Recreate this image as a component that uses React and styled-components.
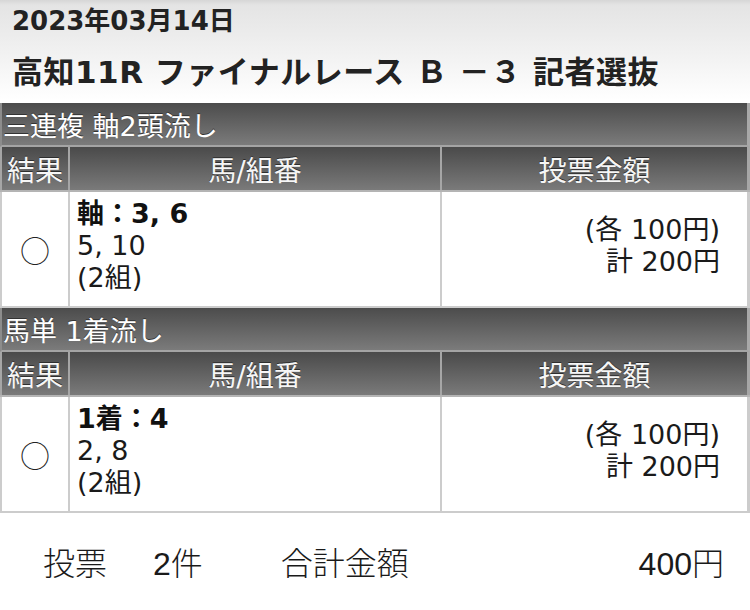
import React from 'react';
import styled, { createGlobalStyle } from 'styled-components';

const GlobalStyle = createGlobalStyle`
  html, body {
    margin: 0;
    padding: 0;
    background: #ffffff;
  }
  body {
    font-family: "DejaVu Sans", "Noto Sans CJK JP", sans-serif;
    color: #1a1a1a;
  }
`;

const bets = [
  {
    id: 1,
    title: '三連複 軸2頭流し',
    main: '軸：3, 6',
    partners: '5, 10',
    combos: '(2組)',
    each: '(各 100円)',
    total: '計 200円',
  },
  {
    id: 2,
    title: '馬単 1着流し',
    main: '1着：4',
    partners: '2, 8',
    combos: '(2組)',
    each: '(各 100円)',
    total: '計 200円',
  },
];

const App = () => {
  return (
    <Page>
      <GlobalStyle />
      <RaceHeader>
        <RaceDate>2023年03月14日</RaceDate>
        <RaceTitle>高知11R ファイナルレース Ｂ －３ 記者選抜</RaceTitle>
      </RaceHeader>

      {bets.map(bet => (
        <Section key={bet.id}>
          <SectionBar>{bet.title}</SectionBar>
          <Row head>
            <HeadCell>結果</HeadCell>
            <HeadCell>馬/組番</HeadCell>
            <HeadCell>投票金額</HeadCell>
          </Row>
          <Row>
            <ResultCell>○</ResultCell>
            <HorseCell>
              <strong>{bet.main}</strong>
              <span>{bet.partners}</span>
              <span>{bet.combos}</span>
            </HorseCell>
            <AmountCell>
              <span>{bet.each}</span>
              <span>{bet.total}</span>
            </AmountCell>
          </Row>
        </Section>
      ))}

      <Summary>
        <span className='label'>投票</span>
        <span className='count'>2件</span>
        <span className='label'>合計金額</span>
        <span className='sum'>400円</span>
      </Summary>
    </Page>
  );
};

export default App;

const Page = styled.div`
  width: 750px;
  height: 610px;
  overflow: hidden;
  background: #ffffff;
`;

const RaceHeader = styled.div`
  height: 103px;
  box-sizing: border-box;
  padding: 6px 12px 0;
  background: linear-gradient(#d6d6d6 0px, #e4e4e4 5px, #f3f3f3 60px, #ffffff 100px);
  color: #222222;
`;

const RaceDate = styled.div`
  font-size: 26px;
  font-weight: bold;
  line-height: 30px;
`;

const RaceTitle = styled.div`
  margin-top: 18px;
  font-size: 31px;
  font-weight: bold;
  line-height: 36px;
  letter-spacing: 0.5px;
  white-space: nowrap;
`;

const Section = styled.div`
  display: flex;
  flex-direction: column;
`;

const SectionBar = styled.div`
  height: 42px;
  padding-left: 1px;
  display: flex;
  align-items: center;
  background: linear-gradient(#4c4c4c, #7b7b7b);
  border-bottom: 2px solid #a4a4a4;
  border-left: 2px solid #8c8c8c;
  border-right: 3px solid #a8a8a8;
  color: #ffffff;
  font-size: 27px;
  text-shadow: 0 -1px 0 #333333;
`;

const Row = styled.div`
  display: grid;
  grid-template-columns: 66px 370px 1fr;
  column-gap: 2px;
  height: ${p => (p.head ? '43px' : '114px')};
  padding-left: 2px;
  padding-right: 3px;
  background: ${p => (p.head ? '#a6a6a6' : '#cccccc')};
  border-bottom: 2px solid ${p => (p.head ? '#b4b4b4' : '#cccccc')};
`;

const HeadCell = styled.div`
  display: flex;
  align-items: center;
  justify-content: center;
  background: linear-gradient(#4a4a4a, #7a7a7a);
  color: #f6f6f6;
  font-size: 28px;
  text-shadow: 0 -1px 0 #2e2e2e;
`;

const ResultCell = styled.div`
  display: flex;
  align-items: center;
  justify-content: center;
  background: #ffffff;
  font-family: "Noto Sans CJK JP", sans-serif;
  font-size: 30px;
  font-weight: 300;
  color: #222222;
`;

const HorseCell = styled.div`
  display: flex;
  flex-direction: column;
  justify-content: center;
  padding: 0 0 6px 7px;
  background: #ffffff;
  font-size: 27px;
  line-height: 32px;
  color: #1a1a1a;

  strong {
    font-weight: bold;
    color: #111111;
  }
`;

const AmountCell = styled.div`
  display: flex;
  flex-direction: column;
  justify-content: center;
  align-items: flex-end;
  padding: 0 27px 6px 0;
  background: #ffffff;
  font-size: 27px;
  line-height: 32px;
  color: #1a1a1a;
`;

const Summary = styled.div`
  display: flex;
  align-items: center;
  height: 96px;
  padding: 0 26px 0 43px;
  font-family: "Liberation Sans", "Noto Sans CJK JP", sans-serif;
  font-size: 32px;
  font-weight: 300;
  color: #1a1a1a;

  .count {
    margin-left: 46px;
  }
  .count + .label {
    margin-left: 78px;
  }
  .sum {
    margin-left: auto;
  }
`;
